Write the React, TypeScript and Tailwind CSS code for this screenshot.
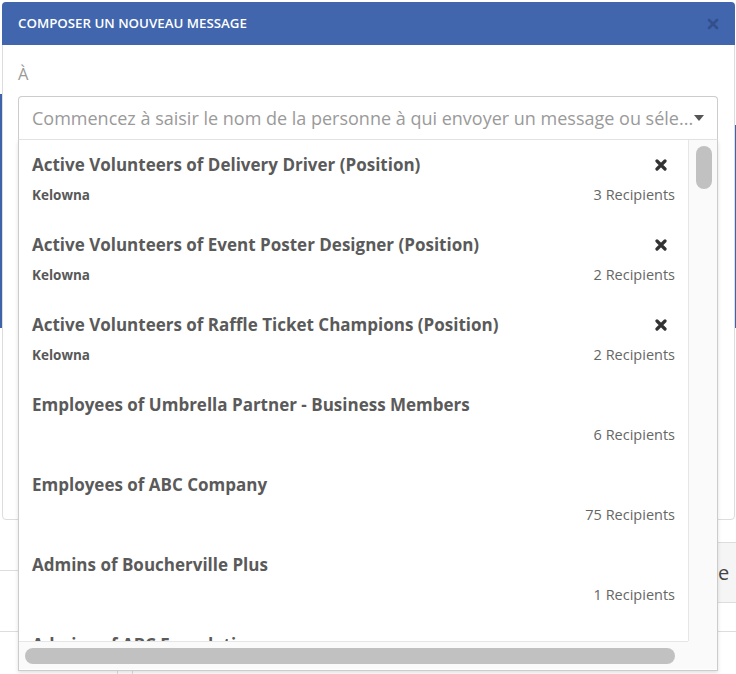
import React from 'react';

type Item = { title: string; place?: string; count: number; removable?: boolean };

const items: Item[] = [
  { title: 'Active Volunteers of Delivery Driver (Position)', place: 'Kelowna', count: 3, removable: true },
  { title: 'Active Volunteers of Event Poster Designer (Position)', place: 'Kelowna', count: 2, removable: true },
  { title: 'Active Volunteers of Raffle Ticket Champions (Position)', place: 'Kelowna', count: 2, removable: true },
  { title: 'Employees of Umbrella Partner - Business Members', count: 6 },
  { title: 'Employees of ABC Company', count: 75 },
  { title: 'Admins of Boucherville Plus', count: 1 },
  { title: 'Admins of ABC Foundation', count: 4 },
];

const Cross: React.FC<{ size?: number; className?: string; stroke?: number }> = ({ size = 12, className = 'text-[#333]', stroke = 3.2 }) => (
  <svg width={size} height={size} viewBox="0 0 12 12" className={className}>
    <path d="M2 2 L10 10 M10 2 L2 10" stroke="currentColor" strokeWidth={stroke} strokeLinecap="round" />
  </svg>
);

const RecipientRow: React.FC<{ item: Item }> = ({ item }) => (
  <div className="h-[80px] shrink-0 px-[13px] pt-[13px]">
    <div className="flex h-[24px] items-center justify-between">
      <span className="whitespace-nowrap text-[17px] font-bold text-[#5a5a5a]">{item.title}</span>
      {item.removable && (
        <span className="mr-[8px]">
          <Cross />
        </span>
      )}
    </div>
    <div className="mt-[8px] flex h-[20px] items-center justify-between">
      <span className="text-[13.5px] font-bold text-[#585858]">{item.place ?? ''}</span>
      <span className="text-[14.5px] text-[#666]">{item.count} Recipients</span>
    </div>
  </div>
);

export default function App() {
  return (
    <div className="relative h-[674px] w-[736px] overflow-hidden bg-white font-['Open_Sans',sans-serif]">
      {/* page behind the modal */}
      <div className="flex h-full flex-col">
        <div className="h-[94px]" />
        <div className="flex h-[234px] justify-between">
          <div className="w-[2px] bg-[#3f63a8]" />
          <div className="mt-[31px] w-[2px] bg-[#3f63a8]" />
        </div>
        <div className="h-[214px]" />
        <div className="flex h-[61px]">
          <div className="h-[29px] flex-1 border-b border-[#ddd]" />
          <div className="flex w-[18px] items-center border-y border-[#ddd] bg-[#f5f5f5] text-[20px] text-[#444]">
            e
          </div>
        </div>
        <div className="h-[29px] border-b border-[#ddd]" />
        <div className="flex flex-1 pl-[117px] pt-[22px]">
          <div className="w-[16px] border-x border-[#ddd]" />
        </div>
      </div>

      {/* modal */}
      <div className="absolute left-[2px] top-[2px] h-[518px] w-[733px] rounded-[4px] border border-[#ddd] bg-white">
        <div className="-m-px flex h-[43px] items-center justify-between rounded-t-[4px] bg-[#4166ad] pl-[16px] pr-[16px]">
          <span className="text-[13.3px] font-semibold text-white">COMPOSER UN NOUVEAU MESSAGE</span>
          <Cross size={12} stroke={2.8} className="text-[#34508c]" />
        </div>
        <div className="px-[15px] pt-[20px]">
          <div className="h-[20px] text-[16.5px] leading-[20px] text-[#9a9a9a]">À</div>
          <div className="relative mt-[12px]">
            <div className="flex h-[44px] w-[700px] items-center justify-between rounded-t-[4px] border border-[#ccc] border-b-[#e5e5e5] pl-[13px] pr-[13px]">
              <span className="whitespace-nowrap text-[18px] text-[#9a9a9a]">
                Commencez à saisir le nom de la personne à qui envoyer un message ou séle...
              </span>
              <span className="h-0 w-0 border-x-[5px] border-t-[6px] border-x-transparent border-t-[#555]" />
            </div>

            {/* dropdown */}
            <div className="absolute left-0 top-full grid h-[531px] w-[700px] grid-cols-[669px_29px] grid-rows-[501px_28px] border border-t-0 border-[#ccc] bg-white shadow-[0_2px_4px_rgba(0,0,0,0.12)]">
              <div className="flex flex-col overflow-hidden">
                {items.map((item) => (
                  <RecipientRow key={item.title} item={item} />
                ))}
              </div>
              <div className="border-l border-[#e6e6e6] bg-[#fafafa] pl-[7px] pt-[6px]">
                <div className="h-[43px] w-[16px] rounded-full bg-[#c1c1c1]" />
              </div>
              <div className="border-t border-[#e6e6e6] bg-[#fafafa] pl-[6px] pt-[6px]">
                <div className="h-[16px] w-[650px] rounded-full bg-[#c1c1c1]" />
              </div>
              <div className="bg-[#fafafa]" />
            </div>
          </div>
        </div>
      </div>
    </div>
  );
}
